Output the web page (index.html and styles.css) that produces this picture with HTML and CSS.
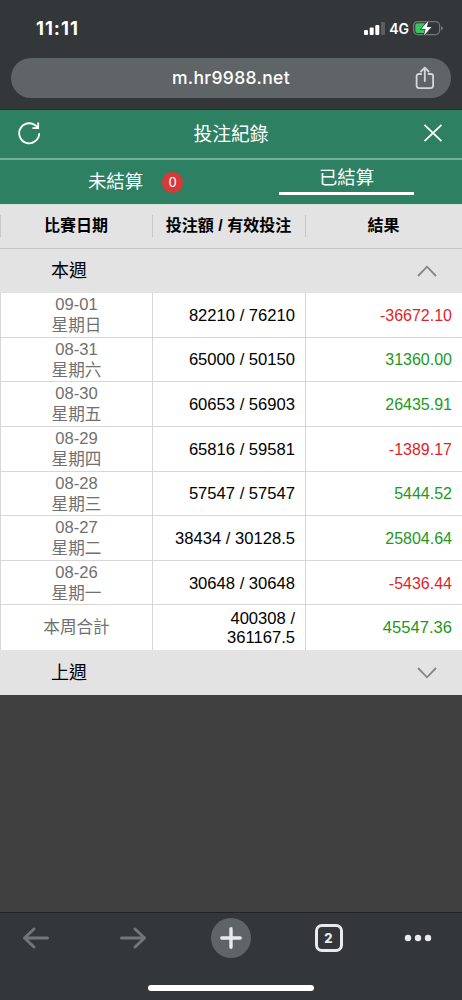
FILE: index.html
```html
<!DOCTYPE html>
<html lang="zh-Hant">
<head>
    <meta charset="UTF-8">
    <meta name="viewport" content="width=device-width, initial-scale=1.0">
    <title>投注紀錄</title>
    <link rel="stylesheet" href="styles.css">
</head>
<body>
    <div class="status-bar">
        <span class="time">11:11</span>
        <div class="status-icons">
            <svg class="signal" width="21" height="13" viewBox="0 0 21 13">
                <rect x="0" y="8" width="4" height="5" rx="1" fill="#fff"/>
                <rect x="5.7" y="5.5" width="4" height="7.5" rx="1" fill="#fff"/>
                <rect x="11.3" y="3" width="4" height="10" rx="1" fill="#fff"/>
                <rect x="17" y="0" width="4" height="13" rx="1" fill="#5b5e61"/>
            </svg>
            <span class="network">4G</span>
            <svg class="battery" width="30" height="16" viewBox="0 0 30 16">
                <rect x="0.6" y="1.6" width="26" height="13" rx="4" fill="none" stroke="#74777a" stroke-width="1.2"/>
                <rect x="2.3" y="3.3" width="11" height="9.6" rx="2" fill="#34c759"/>
                <path d="M28 6v4.4q1.8-.8 1.8-2.2T28 6z" fill="#74777a"/>
                <path d="M15.5 0.5L8.2 9.1h4.5L10.9 15.6L18.5 6.9h-4.6z" fill="#fff" stroke="#34383a" stroke-width="1.4" paint-order="stroke"/>
            </svg>
        </div>
    </div>
    <div class="address-bar">
        <span class="url">m.hr9988.net</span>
        <svg class="share" width="20" height="24" viewBox="0 0 20 24" fill="none" stroke="#d5d7d9" stroke-width="1.8" stroke-linecap="round" stroke-linejoin="round">
            <path d="M6.2 8H3.9Q1.6 8 1.6 10.3v9.3q0 2.5 2.5 2.5h11.5q2.5 0 2.5-2.5v-9.3Q18.1 8 15.8 8h-2.3M9.8 15V1.8M6 5.5L9.8 1.6L13.6 5.5"/>
        </svg>
    </div>

    <div class="page">
        <div class="title-bar">
            <svg width="24" height="24" viewBox="0 0 24 24" fill="none" stroke="#fff" stroke-width="1.8">
                <path d="M22.2 12.2A10 10 0 1 1 20.3 6.4M21.2 1.4v5.8h-5.8"/>
            </svg>
            <h1>投注紀錄</h1>
            <svg width="20" height="20" viewBox="0 0 20 20" fill="none" stroke="#fff" stroke-width="1.8">
                <path d="M1.5 1.8L18.5 18.2M18.5 1.8L1.5 18.2"/>
            </svg>
        </div>
        <div class="tabs">
            <div class="tab"><span class="pending">未結算</span><span class="count">0</span></div>
            <div class="tab active"><span class="tab-label">已結算</span></div>
        </div>

        <div class="row header">
            <div>比賽日期</div>
            <div>投注額 / 有效投注</div>
            <div>結果</div>
        </div>
        <div class="week">
            <span>本週</span>
            <svg width="20" height="12" viewBox="0 0 20 12" fill="none" stroke="#858585" stroke-width="1.8">
                <path d="M1 11L10 1.7L19 11"/>
            </svg>
        </div>
        <div class="records">
            <div class="row">
                <div class="date">09-01<br>星期日</div>
                <div class="bet">82210 / 76210</div>
                <div class="result lose">-36672.10</div>
            </div>
            <div class="row">
                <div class="date">08-31<br>星期六</div>
                <div class="bet">65000 / 50150</div>
                <div class="result win">31360.00</div>
            </div>
            <div class="row">
                <div class="date">08-30<br>星期五</div>
                <div class="bet">60653 / 56903</div>
                <div class="result win">26435.91</div>
            </div>
            <div class="row">
                <div class="date">08-29<br>星期四</div>
                <div class="bet">65816 / 59581</div>
                <div class="result lose">-1389.17</div>
            </div>
            <div class="row">
                <div class="date">08-28<br>星期三</div>
                <div class="bet">57547 / 57547</div>
                <div class="result win">5444.52</div>
            </div>
            <div class="row">
                <div class="date">08-27<br>星期二</div>
                <div class="bet">38434 / 30128.5</div>
                <div class="result win">25804.64</div>
            </div>
            <div class="row">
                <div class="date">08-26<br>星期一</div>
                <div class="bet">30648 / 30648</div>
                <div class="result lose">-5436.44</div>
            </div>
            <div class="row total">
                <div class="date">本周合計</div>
                <div class="bet">400308 /<br>361167.5</div>
                <div class="result win">45547.36</div>
            </div>
        </div>
        <div class="week last">
            <span>上週</span>
            <svg width="20" height="12" viewBox="0 0 20 12" fill="none" stroke="#858585" stroke-width="1.8">
                <path d="M1 1L10 10.3L19 1"/>
            </svg>
        </div>
    </div>

    <div class="toolbar">
        <div class="buttons">
            <svg width="28" height="24" viewBox="0 0 28 24" fill="none" stroke="#737679" stroke-width="3" stroke-linecap="round" stroke-linejoin="round">
                <path d="M25.5 12H2.5M12 3L2.5 12L12 21"/>
            </svg>
            <svg width="28" height="24" viewBox="0 0 28 24" fill="none" stroke="#737679" stroke-width="3" stroke-linecap="round" stroke-linejoin="round">
                <path d="M2.5 12h23M16 3L25.5 12L16 21"/>
            </svg>
            <div class="new-tab">
                <svg width="22" height="22" viewBox="0 0 22 22" stroke="#e8eaed" stroke-width="3.4" stroke-linecap="round">
                    <path d="M1.8 11h18.4M11 1.8v18.4"/>
                </svg>
            </div>
            <div class="tab-count">2</div>
            <svg width="28" height="8" viewBox="0 0 28 8" fill="#e8eaed">
                <circle cx="4" cy="4" r="3.2"/>
                <circle cx="14" cy="4" r="3.2"/>
                <circle cx="24" cy="4" r="3.2"/>
            </svg>
        </div>
        <div class="home-bar"></div>
    </div>
</body>
</html>
```

FILE: styles.css
```css
* {
    box-sizing: border-box;
}
body {
    margin: 0;
    height: 1000px;
    display: flex;
    flex-direction: column;
    overflow: hidden;
    background-color: #34373a;
    color: #000;
    font-family: "Liberation Sans", "Noto Sans CJK TC", sans-serif;
}
svg {
    display: block;
    flex-shrink: 0;
}

/* phone and browser bars */
.status-bar {
    display: flex;
    justify-content: space-between;
    height: 58px;
    padding: 16px 19px 0 36px;
    color: #fff;
    font-family: Inter, sans-serif;
}
.time {
    font-size: 18.4px;
    line-height: 24px;
    font-weight: 700;
    letter-spacing: 1px;
}
.status-icons {
    display: flex;
    align-items: center;
    height: 24px;
}
.network {
    margin: 0 4px;
    font-size: 14px;
    font-weight: 600;
}
.address-bar {
    display: grid;
    grid-template-columns: 1fr auto 1fr;
    align-items: center;
    height: 40px;
    margin: 0 11px 11px;
    padding: 0 16px;
    border-radius: 20px;
    background-color: #5f6467;
    color: #fff;
}
.url {
    grid-column: 2;
    padding-bottom: 2px;
    font-family: Inter, sans-serif;
    font-size: 17.5px;
    font-weight: 500;
    letter-spacing: 0.35px;
}
.share {
    justify-self: end;
}

.page {
    flex: 1;
    background-color: #404040;
}
.title-bar {
    display: flex;
    align-items: center;
    justify-content: space-between;
    height: 51px;
    padding: 0 19px 2px 17px;
    border-top: 1px solid #17392c;
    border-bottom: 2px solid #77ac99;
    background-color: #2e8062;
    color: #fff;
}
.title-bar h1 {
    margin: 0;
    padding: 0 2px 2px 0;
    font-size: 18.8px;
    font-weight: 400;
}
.tabs {
    display: grid;
    grid-template-columns: 1fr 1fr;
    height: 44px;
    background-color: #2e8062;
    color: #fff;
    font-size: 18.4px;
}
.tab {
    display: flex;
    align-items: center;
    justify-content: center;
    padding-left: 40px;
}
.tab.active {
    align-items: flex-start;
    justify-content: center;
    padding: 0;
}
.tab-label {
    width: 135px;
    height: 35px;
    border-bottom: 3px solid #fff;
    line-height: 36px;
    text-align: center;
}
.pending {
    padding-bottom: 4px;
}
.count {
    width: 21px;
    height: 21px;
    margin-left: 19px;
    border-radius: 50%;
    background-color: #d93738;
    font-size: 14px;
    line-height: 21px;
    text-align: center;
}

/* records table */
.row {
    display: grid;
    grid-template-columns: 152px 153px 157px;
    height: 44.625px;
    border-bottom: 1px solid #d6d6d6;
    background-color: #fff;
    font-size: 16.6px;
}
.row > div {
    display: flex;
    align-items: center;
    border-left: 1px solid #d6d6d6;
}
.header {
    height: 45px;
    padding: 10px 0 11px;
    border-top: 1px solid #d3dfda;
    border-bottom: 1px solid #c4c4c4;
    background-color: #e3e3e3;
    font-size: 16px;
    font-weight: 700;
    line-height: 16px;
}
.header > div {
    justify-content: center;
    padding-right: 1px;
    border-left-color: #c8c8c8;
}
.week {
    display: flex;
    align-items: center;
    justify-content: space-between;
    height: 44px;
    padding: 0 25px 0 51px;
    background-color: #e3e3e3;
    font-size: 18px;
}
.week span {
    padding-bottom: 4px;
}
.week.last {
    height: 45px;
}
.total {
    border-bottom: none;
}
.row > .date {
    display: block;
    padding-top: 1px;
    color: #707070;
    line-height: 21px;
    text-align: center;
}
.total > .date {
    line-height: 43px;
}
.row > .bet {
    justify-content: flex-end;
    padding: 1px 10px 0 0;
    line-height: 19px;
    text-align: right;
}
.row > .result {
    justify-content: flex-end;
    padding: 2px 10px 0 0;
    font-size: 16px;
}
.total > .result {
    padding-top: 0;
    font-size: 16.6px;
}
.win {
    color: #1d981d;
}
.lose {
    color: #df1f2b;
}

.toolbar {
    height: 88px;
    border-top: 1px solid #202224;
}
.buttons {
    display: grid;
    grid-template-columns: 71px 124px 72px 123px 56px;
    align-items: center;
    justify-items: center;
    height: 50px;
}
.new-tab {
    display: flex;
    align-items: center;
    justify-content: center;
    width: 40px;
    height: 40px;
    border-radius: 50%;
    background-color: #5f6467;
}
.tab-count {
    width: 28px;
    height: 28px;
    border: 3px solid #e8eaed;
    border-radius: 7px;
    color: #e8eaed;
    font-family: Inter, sans-serif;
    font-size: 13px;
    font-weight: 800;
    line-height: 22px;
    text-align: center;
}
.home-bar {
    width: 166px;
    height: 6px;
    margin: 22px auto 0;
    border-radius: 3px;
    background-color: #fff;
}
```
